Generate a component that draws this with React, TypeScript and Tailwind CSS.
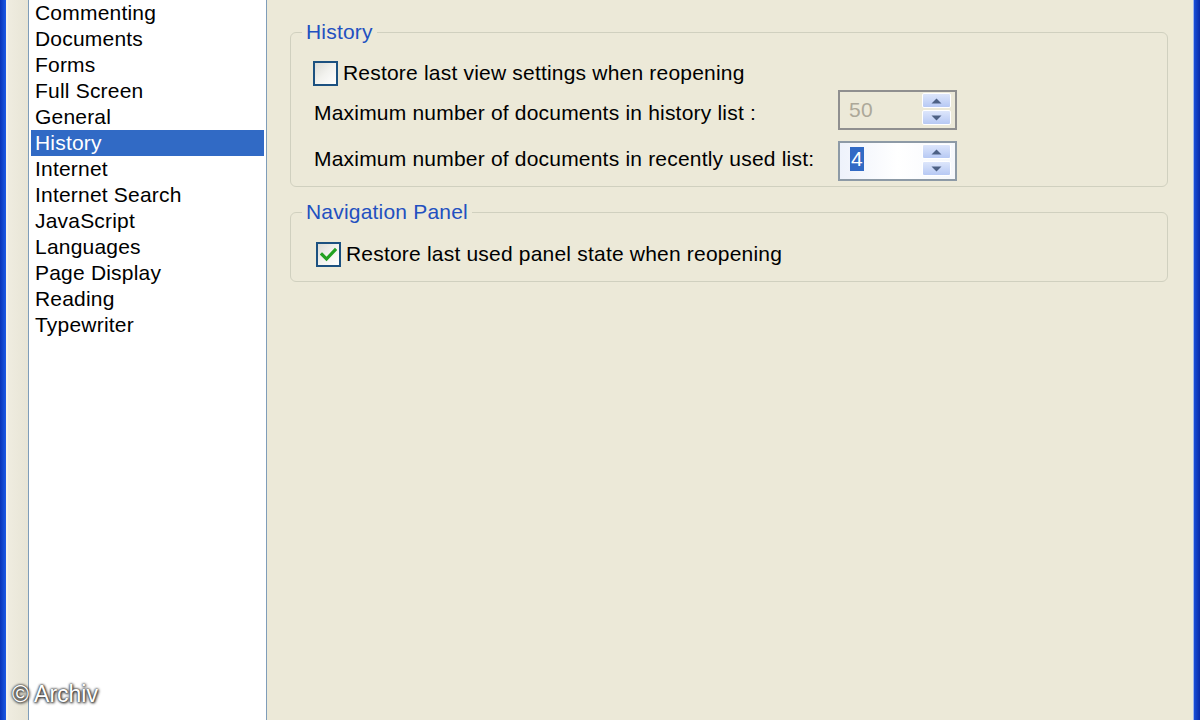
import React from "react";

const items = [
  "Commenting",
  "Documents",
  "Forms",
  "Full Screen",
  "General",
  "History",
  "Internet",
  "Internet Search",
  "JavaScript",
  "Languages",
  "Page Display",
  "Reading",
  "Typewriter",
];

function Checkbox({ checked }: { checked?: boolean }) {
  return (
    <div className="w-[25px] h-[25px] border-2 border-[#1c5180] bg-gradient-to-br from-[#dcdcd6] via-[#f2f2ee] to-white flex items-center justify-center shrink-0">
      {checked && (
        <svg width="17" height="15" viewBox="0 0 17 15">
          <path d="M2 7.5 L6.5 12 L15 3" stroke="#21a121" strokeWidth="3.2" fill="none" strokeLinecap="square" />
        </svg>
      )}
    </div>
  );
}

function SpinButtons() {
  return (
    <div className="flex flex-col gap-[2px] w-[29px] mr-[4px] self-start mt-[1px]">
      <div className="h-[15px] bg-gradient-to-b from-[#dde6fb] to-[#b7c9f4] border border-white rounded-[2px] flex items-center justify-center">
        <svg width="11" height="6" viewBox="0 0 11 6"><path d="M0.5 5.5 L5.5 0.5 L10.5 5.5 Z" fill="#4d6185" /></svg>
      </div>
      <div className="h-[15px] bg-gradient-to-b from-[#dde6fb] to-[#b7c9f4] border border-white rounded-[2px] flex items-center justify-center">
        <svg width="11" height="6" viewBox="0 0 11 6"><path d="M0.5 0.5 L5.5 5.5 L10.5 0.5 Z" fill="#4d6185" /></svg>
      </div>
    </div>
  );
}

export default function App() {
  return (
    <div
      className="relative w-[1200px] h-[720px] overflow-hidden flex bg-[#ece9d8] text-black text-[21px] tracking-[0.2px]"
      style={{ fontFamily: '"Liberation Sans", Arial, sans-serif' }}
    >
      {/* left window border */}
      <div className="w-[6px] h-full bg-gradient-to-r from-[#0832b8] to-[#1d5ae6] shrink-0" />
      <div className="w-[2px] h-full bg-[#f4f2ea] shrink-0" />
      <div className="w-[20px] h-full bg-gradient-to-r from-[#efece0] to-[#e8e5d6] shrink-0" />

      {/* list */}
      <div className="w-[239px] h-full border-x border-[#7f9db9] bg-white px-[2px] shrink-0">
        <div className="flex flex-col">
          {items.map((it) => (
            <div
              key={it}
              className={
                "h-[26px] leading-[26px] pl-[4px] whitespace-nowrap " +
                (it === "History" ? "bg-[#316ac5] text-white" : "text-black")
              }
            >
              {it}
            </div>
          ))}
        </div>
      </div>

      {/* right panel */}
      <div className="flex-1 h-full pl-[23px] pr-[25px] pt-[20px]">
        <fieldset className="border border-[#d0d0bf] rounded-[6px] px-0 pb-[5px] m-0">
          <legend className="ml-[11px] px-[4px] text-[#2250c0] leading-[24px]">History</legend>
          <div className="flex items-center h-[26px] mt-[16px] pl-[22px]">
            <Checkbox />
            <span className="ml-[5px] whitespace-nowrap">Restore last view settings when reopening</span>
          </div>
          <div className="flex items-center h-[40px] mt-[4px] pl-[23px]">
            <span className="w-[524px] whitespace-nowrap pt-[5px]">Maximum number of documents in history list :</span>
            <div className="w-[119px] h-[40px] border-2 border-[#8f8f8f] bg-[#ece9d8] flex items-center justify-between">
              <span className="pl-[9px] text-[#aca899]">50</span>
              <SpinButtons />
            </div>
          </div>
          <div className="flex items-center h-[40px] mt-[11px] pl-[23px]">
            <span className="w-[524px] whitespace-nowrap pb-[4px]">Maximum number of documents in recently used list:</span>
            <div className="w-[119px] h-[40px] border-2 border-[#8d9aa6] bg-gradient-to-r from-[#eef2fb] via-white to-[#f6f8fc] flex items-center justify-between">
              <span className="ml-[10px] mb-[4px] bg-[#316ac5] text-white leading-[24px] px-[1px]">4</span>
              <SpinButtons />
            </div>
          </div>
        </fieldset>

        <fieldset className="mt-[13px] border border-[#d0d0bf] rounded-[6px] px-0 pb-[14px] m-0">
          <legend className="ml-[11px] px-[4px] text-[#2250c0] leading-[24px]">Navigation Panel</legend>
          <div className="flex items-center h-[26px] mt-[17px] pl-[25px]">
            <Checkbox checked />
            <span className="ml-[5px] whitespace-nowrap">Restore last used panel state when reopening</span>
          </div>
        </fieldset>
      </div>

      {/* right window border */}
      <div className="w-[1px] h-full bg-[#9db4ee] shrink-0" />
      <div className="w-[6px] h-full bg-gradient-to-r from-[#1a4fd8] to-[#0a2aa8] shrink-0" />

      {/* watermark */}
      <div
        className="absolute left-[12px] bottom-[9px] text-white text-[23px] tracking-normal"
        style={{ textShadow: "0 0 3px #333, 0 0 2px #333, 1px 1px 3px #222" }}
      >
        © Archiv
      </div>
    </div>
  );
}
